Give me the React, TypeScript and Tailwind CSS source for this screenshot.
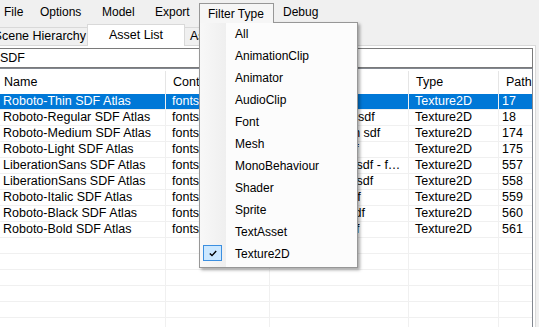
import React from "react";

const menus = [
  { label: "File", w: "w-[36px] ml-[-5px]" },
  { label: "Options", w: "w-[62px]" },
  { label: "Model", w: "w-[53px]" },
  { label: "Export", w: "w-[53px]" },
  { label: "Filter Type", w: "w-[75px]", open: true },
  { label: "Debug", w: "w-[60px]" },
];

const filterItems = [
  "All",
  "AnimationClip",
  "Animator",
  "AudioClip",
  "Font",
  "Mesh",
  "MonoBehaviour",
  "Shader",
  "Sprite",
  "TextAsset",
  "Texture2D",
];

const cols = [
  { head: "Name", w: "w-[169px]" },
  { head: "Container", w: "w-[104px]" },
  { head: "Source File", w: "w-[139px]" },
  { head: "Type", w: "w-[90px]" },
  { head: "PathID", w: "w-[70px]" },
];

const rows = [
  ["Roboto-Thin SDF Atlas", "fonts/roboto-thin sdf atlas", "roboto-thin sdf", "Texture2D", "17"],
  ["Roboto-Regular SDF Atlas", "fonts/roboto-regular sdf atlas", "roboto-regular sdf", "Texture2D", "18"],
  ["Roboto-Medium SDF Atlas", "fonts/roboto-medium sdf atlas", "roboto-medium sdf", "Texture2D", "174"],
  ["Roboto-Light SDF Atlas", "fonts/roboto-light sdf atlas", "roboto-light sdf", "Texture2D", "175"],
  ["LiberationSans SDF Atlas", "fonts/liberationsans sdf atlas", "liberationsans sdf - fallback", "Texture2D", "557"],
  ["LiberationSans SDF Atlas", "fonts/liberationsans sdf atlas", "liberationsans sdf", "Texture2D", "558"],
  ["Roboto-Italic SDF Atlas", "fonts/roboto-italic sdf atlas", "roboto-italic sdf", "Texture2D", "559"],
  ["Roboto-Black SDF Atlas", "fonts/roboto-black sdf atlas", "roboto-black sdf", "Texture2D", "560"],
  ["Roboto-Bold SDF Atlas", "fonts/roboto-bold sdf atlas", "roboto-bold sdf", "Texture2D", "561"],
  ["", "", "", "", ""],
  ["", "", "", "", ""],
  ["", "", "", "", ""],
  ["", "", "", "", ""],
  ["", "", "", "", ""],
  ["", "", "", "", ""],
];

export default function App() {
  return (
    <div className="relative h-[327px] w-[539px] overflow-hidden bg-[#f0f0f0] font-['Liberation_Sans',Arial,sans-serif] text-black">
      {/* Menu strip */}
      <div className="flex h-[22px] items-start text-[12px]">
        {menus.map((m) =>
          m.open ? (
            <div
              key={m.label}
              className={`relative z-20 mt-[3px] flex h-[20px] items-center border border-b-0 border-[#979797] bg-[#f6f6f6] pl-[8px] ${m.w}`}
            >
              {m.label}
            </div>
          ) : (
            <div key={m.label} className={`flex h-[22px] items-center pl-[9px] pt-[2px] ${m.w}`}>
              {m.label}
            </div>
          )
        )}
      </div>

      {/* Tabs */}
      <div className="flex h-[23px] items-end text-[12.5px]">
        <div className="ml-[-8px] flex h-[18px] w-[95px] items-center justify-end overflow-hidden whitespace-nowrap border border-r-0 border-b-0 border-[#d9d9d9] pr-[1px]">
          Scene Hierarchy
        </div>
        <div className="relative z-10 mb-[-1px] flex h-[22px] w-[98px] items-center justify-center border border-b-0 border-[#d9d9d9] bg-white">
          Asset List
        </div>
        <div className="flex h-[18px] w-[90px] items-center whitespace-nowrap border border-l-0 border-b-0 border-[#d9d9d9] pl-[5px]">
          Asset Classes
        </div>
      </div>

      {/* Tab page */}
      <div className="ml-[-4px] h-[300px] w-[540px] border-t border-r border-[#d9d9d9] bg-white pr-[2px] pt-[2px] text-[12.5px]">
        <div className="flex h-[20px] items-center border border-[#7a7a7a] pl-[3px]">SDF</div>

        <div className="h-[270px] overflow-hidden border border-[#828790]">
          <div className="flex h-[25px] w-[600px] pt-[2px]">
            {cols.map((c) => (
              <div
                key={c.head}
                className={`flex shrink-0 items-center overflow-hidden whitespace-nowrap border-r border-[#e5e5e5] pl-[7px] ${c.w}`}
              >
                {c.head}
              </div>
            ))}
          </div>
          {rows.map((r, i) => (
            <div
              key={i}
              className={`flex h-[16px] w-[600px] border-b border-[#f0f0f0] leading-[15px] ${
                i === 0 ? "bg-[#0078d7] text-white" : ""
              }`}
            >
              {r.map((cell, j) => (
                <div
                  key={j}
                  className={`shrink-0 overflow-hidden text-ellipsis whitespace-nowrap border-r border-[#f0f0f0] ${
                    j === 4 ? "pl-[3px]" : "pl-[6px] pr-[4px]"
                  } ${cols[j].w}`}
                >
                  {cell}
                </div>
              ))}
            </div>
          ))}
        </div>
      </div>

      {/* Filter Type drop-down */}
      <div className="absolute left-[199px] top-[22px] z-10 h-[246px] w-[159px] border border-[#979797] bg-[#fcfcfc] pb-[2px] text-[12px] shadow-[2px_2px_3px_rgba(0,0,0,0.35)]">
        <div className="absolute inset-y-0 left-0 w-[26px] bg-gradient-to-r from-[#f8f8f8] to-[#efefef]" />
        {filterItems.map((item) => (
          <div key={item} className="relative flex h-[22px] items-center pl-[35px]">
            {item === "Texture2D" && (
              <div className="absolute left-[3px] top-[2px] flex h-[16px] w-[19px] items-center justify-center border border-[#3c8fe0] bg-[#cce8ff]">
                <svg width="8" height="7" viewBox="0 0 8 7">
                  <polyline points="0.8,3.4 3,5.6 7.2,1" fill="none" stroke="#000" strokeWidth="1.4" />
                </svg>
              </div>
            )}
            {item}
          </div>
        ))}
      </div>
    </div>
  );
}
